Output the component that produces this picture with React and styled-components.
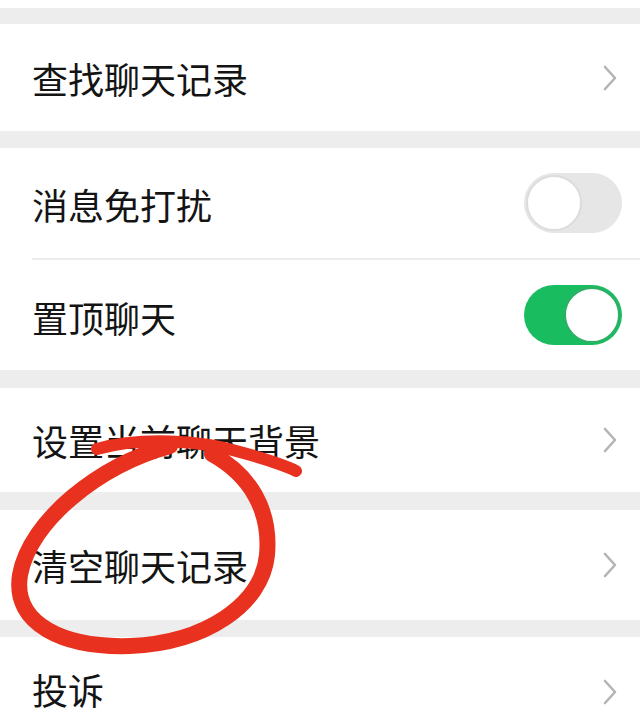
import React from "react";
import styled, { createGlobalStyle } from "styled-components";

const Global = createGlobalStyle`
  html, body { margin: 0; padding: 0; background: #ededed; }
  body { font-family: "Noto Sans CJK SC", "Noto Sans", sans-serif; }
`;

const Page = styled.div`
  position: relative;
  width: 640px;
  height: 725px;
  overflow: hidden;
  background: #ededed;
  display: flex;
  flex-direction: column;
`;

const TopStrip = styled.div`
  height: 8px;
  background: #ffffff;
  flex-shrink: 0;
`;

const Gap = styled.div`
  height: ${(p) => p.$h}px;
  flex-shrink: 0;
`;

const Group = styled.div`
  background: #ffffff;
  display: flex;
  flex-direction: column;
  flex-shrink: 0;
`;

const Row = styled.div`
  height: ${(p) => p.$h}px;
  display: flex;
  align-items: center;
  justify-content: space-between;
  padding: 0 18px 0 32px;
  box-sizing: border-box;
`;

const Label = styled.span`
  font-size: 36px;
  line-height: 1;
  color: #141414;
  letter-spacing: 0;
  transform: translateY(${(p) => p.$dy || 0}px);
`;

const Separator = styled.div`
  height: 2px;
  margin-left: 32px;
  background: #ececec;
`;

const ChevronWrap = styled.span`
  display: flex;
  width: 20px;
  justify-content: center;
  margin-right: 2px;
`;

const Track = styled.div`
  width: 98px;
  height: 60px;
  border-radius: 30px;
  box-sizing: border-box;
  background: ${(p) => (p.$on ? "#19bd60" : "#e6e6e6")};
  display: flex;
  align-items: center;
  justify-content: ${(p) => (p.$on ? "flex-end" : "flex-start")};
  padding: 2px;
`;

const Knob = styled.div`
  width: 56px;
  height: 56px;
  border-radius: 50%;
  background: #ffffff;
  box-sizing: border-box;
  border: 2px solid ${(p) => (p.$on ? "#2fae68" : "#dcdcdc")};
`;

const Annotation = styled.svg`
  position: absolute;
  left: 0;
  top: 0;
  width: 640px;
  height: 725px;
  pointer-events: none;
`;

const Chevron = () => (
  <ChevronWrap>
    <svg width="16" height="26" viewBox="0 0 16 26">
      <path d="M3 2 L13 13 L3 24" fill="none" stroke="#b4b4b4" strokeWidth="2.6" strokeLinecap="round" strokeLinejoin="round" />
    </svg>
  </ChevronWrap>
);

const Toggle = ({ on }) => (
  <Track $on={on}>
    <Knob $on={on} />
  </Track>
);

export default function App() {
  return (
    <>
      <Global />
      <Page>
        <TopStrip />
        <Gap $h={16} />
        <Group>
          <Row $h={107}>
            <Label>查找聊天记录</Label>
            <Chevron />
          </Row>
        </Group>
        <Gap $h={17} />
        <Group>
          <Row $h={110}>
            <Label $dy={1}>消息免打扰</Label>
            <Toggle on={false} />
          </Row>
          <Separator />
          <Row $h={110}>
            <Label $dy={2}>置顶聊天</Label>
            <Toggle on={true} />
          </Row>
        </Group>
        <Gap $h={18} />
        <Group>
          <Row $h={104}>
            <Label>设置当前聊天背景</Label>
            <Chevron />
          </Row>
        </Group>
        <Gap $h={18} />
        <Group>
          <Row $h={110}>
            <Label>清空聊天记录</Label>
            <Chevron />
          </Row>
        </Group>
        <Gap $h={17} />
        <Group>
          <Row $h={110}>
            <Label $dy={-3}>投诉</Label>
            <Chevron />
          </Row>
        </Group>
        <Annotation viewBox="0 0 640 725">
          <path
            d="M97 449 C 140 437, 200 440, 240 452 C 262 458, 283 464, 296 471"
            fill="none"
            stroke="#e8321f"
            strokeWidth="12"
            strokeLinecap="round"
          />
          <path
            d="M170 446 C 100 465, 30 520, 20 575 C 12 625, 65 648, 130 646 C 205 643, 262 605, 267 555 C 271 510, 250 475, 212 454"
            fill="none"
            stroke="#e8321f"
            strokeWidth="16"
            strokeLinecap="round"
          />
        </Annotation>
      </Page>
    </>
  );
}
